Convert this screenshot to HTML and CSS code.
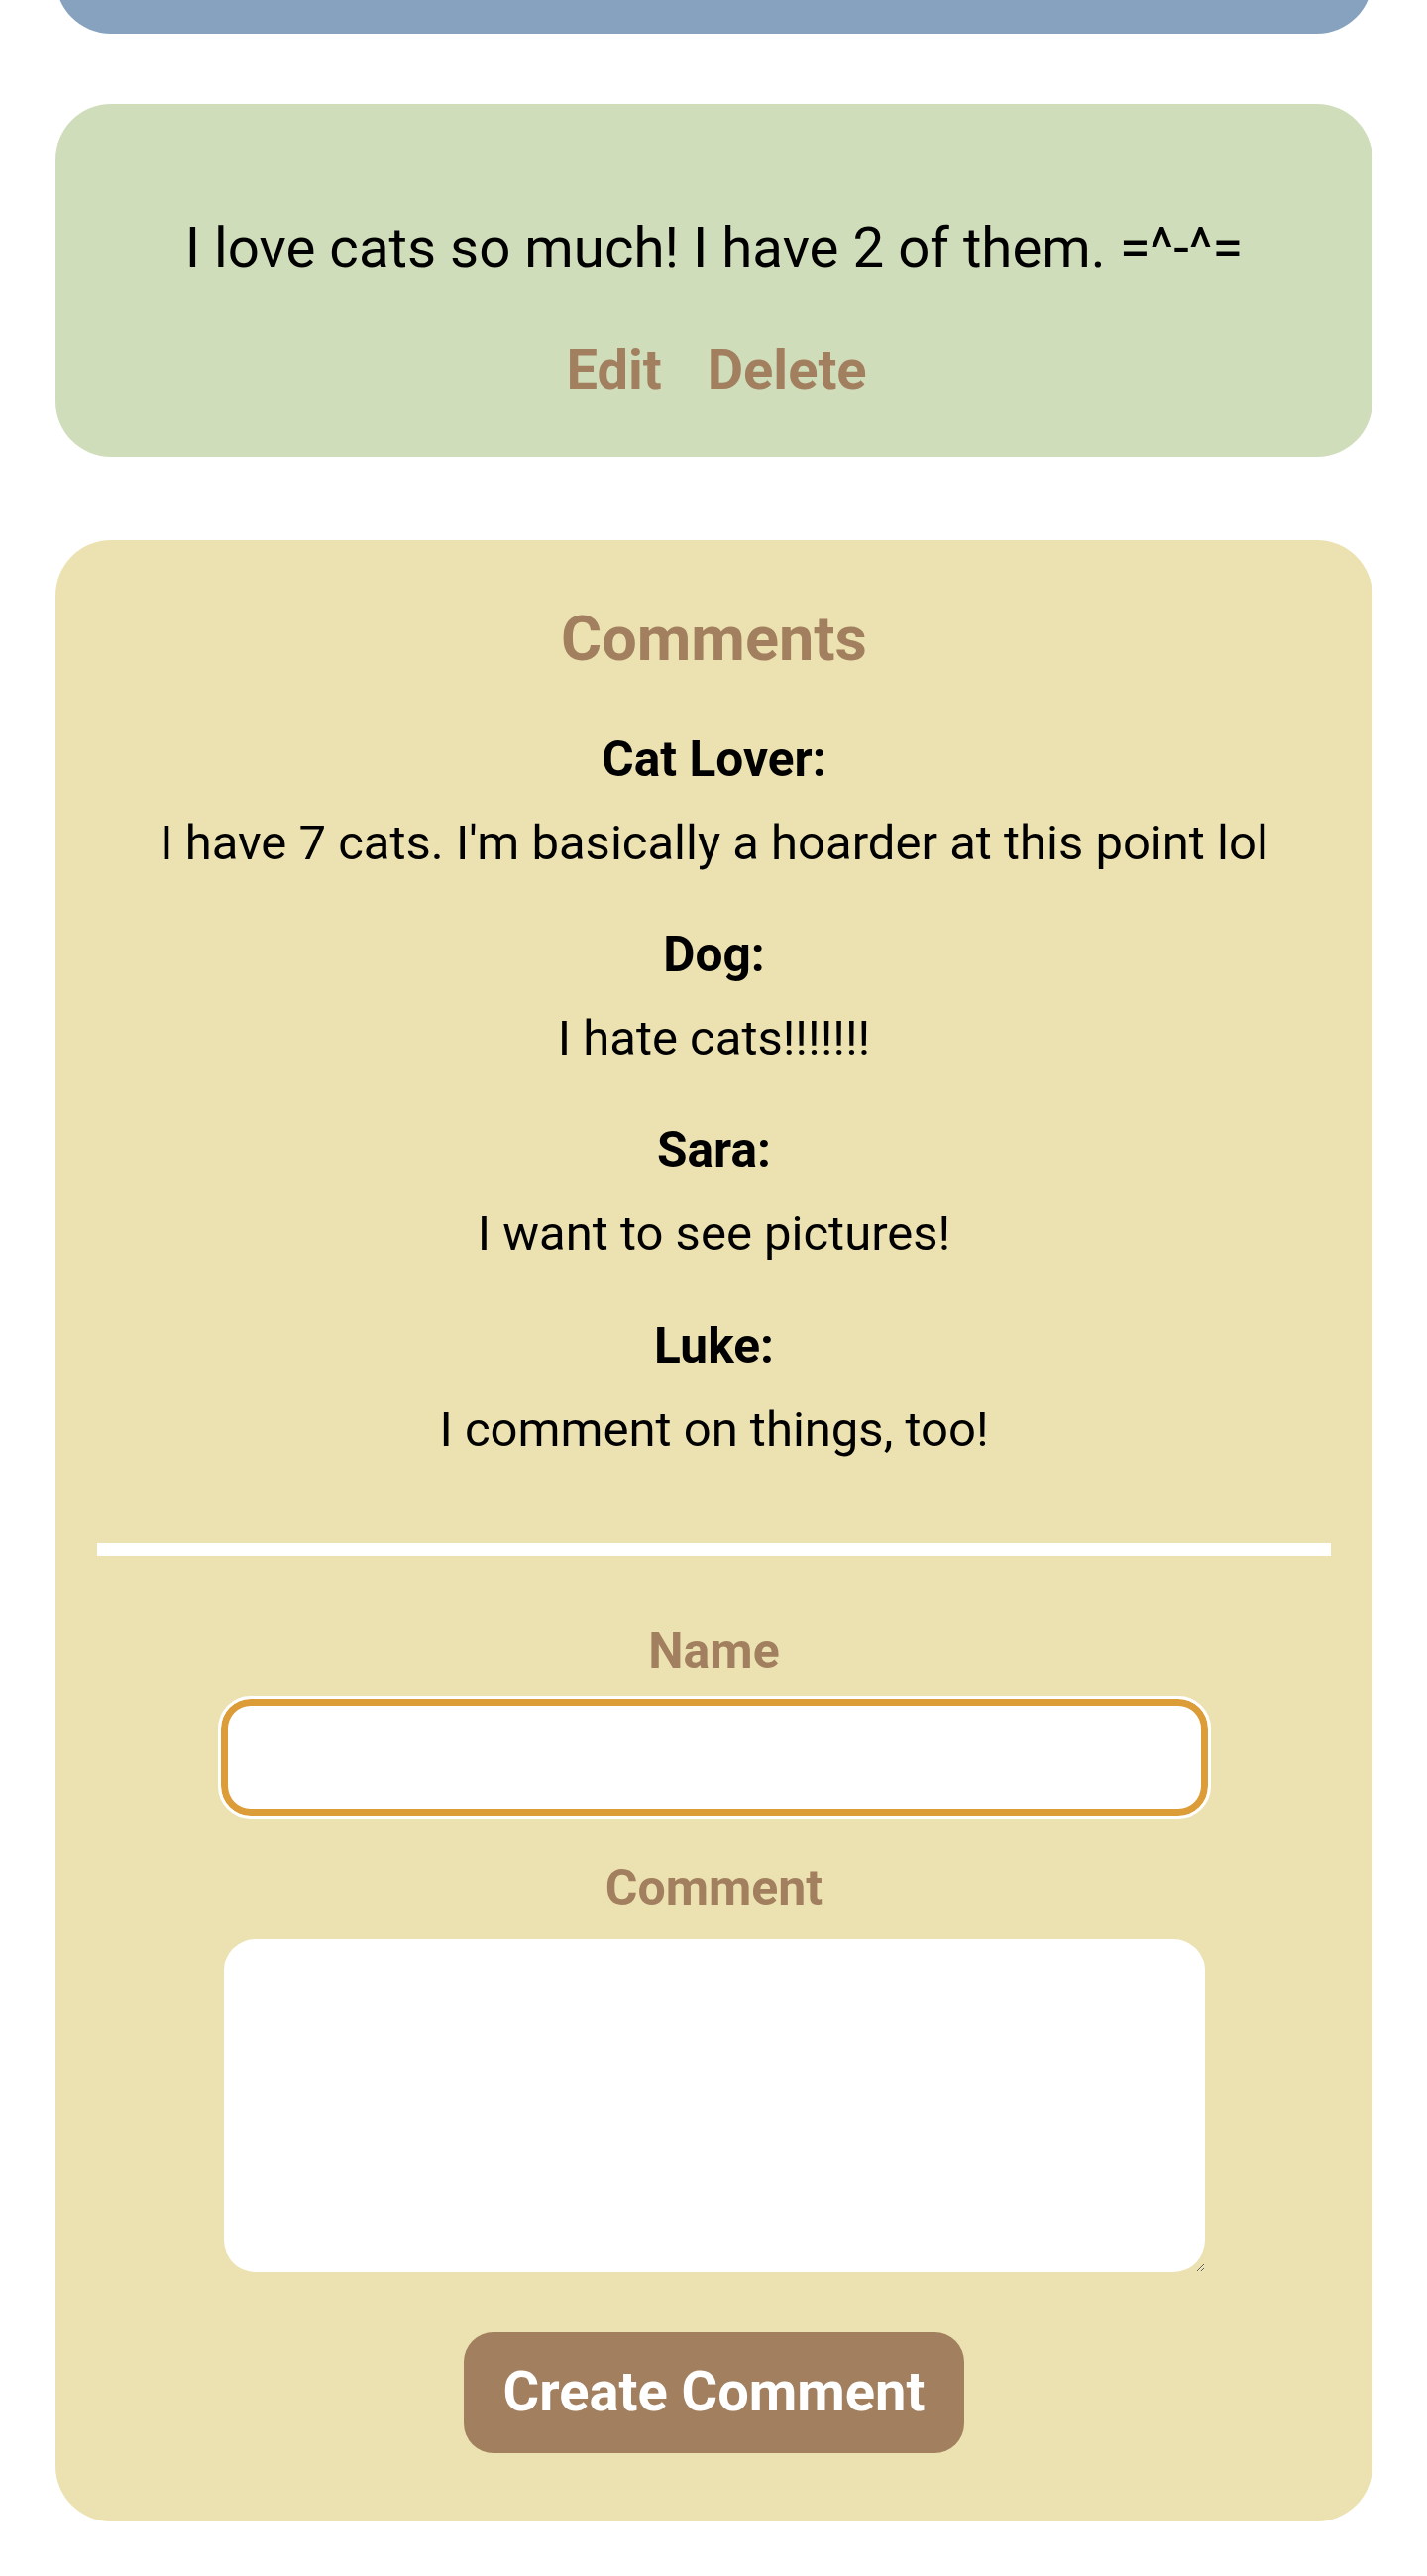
FILE: index.html
```html
<!DOCTYPE html>
<html lang="en">
<head>
<meta charset="utf-8">
<title>Post</title>
<link rel="stylesheet" href="styles.css">
</head>
<body>
  <main class="page">
    <div class="post-header"></div>

    <section class="post-card">
      <p class="post-body">I love cats so much! I have 2 of them. =^-^=</p>
      <div class="post-actions">
        <button class="link-btn" type="button">Edit</button>
        <button class="link-btn" type="button">Delete</button>
      </div>
    </section>

    <section class="comments-card">
      <h2 class="comments-title">Comments</h2>
      <ul class="comment-list">
        <li class="comment">
          <p class="comment-author">Cat Lover:</p>
          <p class="comment-text">I have 7 cats. I'm basically a hoarder at this point lol</p>
        </li>
        <li class="comment">
          <p class="comment-author">Dog:</p>
          <p class="comment-text">I hate cats!!!!!!!</p>
        </li>
        <li class="comment">
          <p class="comment-author">Sara:</p>
          <p class="comment-text">I want to see pictures!</p>
        </li>
        <li class="comment">
          <p class="comment-author">Luke:</p>
          <p class="comment-text">I comment on things, too!</p>
        </li>
      </ul>
      <hr class="divider">
      <form class="comment-form">
        <label class="form-label form-label-name" for="name">Name</label>
        <input class="name-input" id="name" type="text">
        <label class="form-label form-label-comment" for="comment">Comment</label>
        <textarea class="comment-input" id="comment"></textarea>
        <button class="submit-btn" type="button">Create Comment</button>
      </form>
    </section>
  </main>
</body>
</html>
```
FILE: styles.css
```css
* {
  box-sizing: border-box;
}

html, body {
  margin: 0;
  padding: 0;
  background: #ffffff;
}

body {
  font-family: Roboto, "Liberation Sans", Arial, sans-serif;
  color: #000;
  line-height: 1.2;
  overflow: hidden;
}

.page {
  padding: 0 55px 56px 56px;
}

.post-header {
  height: 200px;
  margin-top: -166px;
  background: #87a2bf;
  border-radius: 56px;
}

.post-card {
  margin-top: 71px;
  background: #d0ddba;
  border-radius: 56px;
  padding: 56px 56px 54px;
  text-align: center;
}

.post-body {
  margin: 55.5px 0 56px;
  font-size: 56.4px;
  line-height: 67.2px;
}

.post-actions {
  display: flex;
  justify-content: center;
  gap: 46px;
  padding-left: 5px;
}

.link-btn {
  background: none;
  border: 0;
  padding: 0;
  font-family: inherit;
  font-size: 56px;
  font-weight: 700;
  line-height: 67.2px;
  color: #a2805f;
  cursor: pointer;
}

.comments-card {
  margin-top: 84px;
  background: #ece2b1;
  border-radius: 56px;
  padding: 62px 42px 69px;
  text-align: center;
}

.comments-title {
  margin: 0 0 53px;
  font-size: 63px;
  font-weight: 700;
  line-height: 75.6px;
  color: #a2805f;
}

.comment-list {
  list-style: none;
  margin: 0;
  padding: 0;
  display: flex;
  flex-direction: column;
  gap: 52.6px;
}

.comment {
  display: flex;
  flex-direction: column;
  gap: 26px;
}

.comment-author,
.comment-text {
  margin: 0;
}

.comment-author {
  font-size: 49.6px;
  font-weight: 700;
  line-height: 60px;
}

.comment-text {
  font-size: 49px;
  line-height: 58.8px;
}

.divider {
  margin: 85px 0 0;
  height: 13px;
  border: 0;
  background: #ffffff;
}

.comment-form {
  display: flex;
  flex-direction: column;
  align-items: center;
}

.form-label {
  display: block;
  font-size: 50px;
  font-weight: 700;
  line-height: 60px;
  color: #a2805f;
}

.form-label-name {
  margin-top: 65.6px;
}

.name-input {
  display: block;
  margin-top: 15.4px;
  width: 1002px;
  height: 124px;
  border: 3px solid #ffffff;
  border-radius: 33px;
  background: #ffffff;
  box-shadow: inset 0 0 0 7px #dc9c37;
  outline: none;
  font-family: inherit;
  font-size: 48px;
  padding: 0 30px;
}

.form-label-comment {
  margin-top: 39.6px;
}

.comment-input {
  display: block;
  margin-top: 21.1px;
  width: 990px;
  height: 335.7px;
  border: 0;
  border-radius: 32px;
  background: #ffffff;
  font-family: inherit;
  font-size: 48px;
  padding: 20px 30px;
  outline: none;
}

.submit-btn {
  margin-top: 61.6px;
  padding: 27px 40px 27.2px;
  border: 0;
  border-radius: 30px;
  background: #a2805f;
  color: #ffffff;
  font-family: inherit;
  font-size: 56px;
  font-weight: 700;
  line-height: 67.2px;
  cursor: pointer;
}
```
